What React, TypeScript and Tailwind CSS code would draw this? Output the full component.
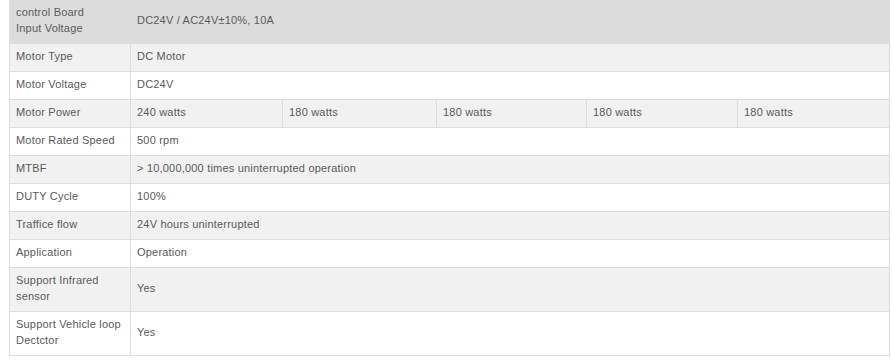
import { Fragment } from "react";

const rows: { label: string; value: string; shade: "dark" | "gray" | "white" }[] = [
  { label: "control Board\nInput Voltage", value: "DC24V / AC24V±10%, 10A", shade: "dark" },
  { label: "Motor Type", value: "DC Motor", shade: "gray" },
  { label: "Motor Voltage", value: "DC24V", shade: "white" },
];

const rest: { label: string; value: string; shade: "gray" | "white" }[] = [
  { label: "Motor Rated Speed", value: "500 rpm", shade: "white" },
  { label: "MTBF", value: "> 10,000,000 times uninterrupted operation", shade: "gray" },
  { label: "DUTY Cycle", value: "100%", shade: "white" },
  { label: "Traffice flow", value: "24V hours uninterrupted", shade: "gray" },
  { label: "Application", value: "Operation", shade: "white" },
  { label: "Support Infrared sensor", value: "Yes", shade: "gray" },
  { label: "Support Vehicle loop Dectctor", value: "Yes", shade: "white" },
];

const power = ["240 watts", "180 watts", "180 watts", "180 watts", "180 watts"];

const bg = {
  dark: "bg-[#dcdcdc]",
  gray: "bg-[#f1f1f1]",
  white: "bg-white",
};

const cell = "border border-[#dddddd] px-[6px] pt-[4px] pb-[7px] align-middle";

function Row({ label, value, shade }: { label: string; value: string; shade: keyof typeof bg }) {
  const lines = label.split("\n");
  return (
    <tr className={bg[shade]}>
      <td className={cell}>
        {lines.map((l, i) => (
          <Fragment key={i}>
            {i > 0 && <br />}
            {l}
          </Fragment>
        ))}
      </td>
      <td className={cell} colSpan={5}>
        {value}
      </td>
    </tr>
  );
}

export default function App() {
  return (
    <div className="h-[360px] w-[892px] overflow-hidden bg-white">
      <table
        className="-mt-px ml-[9px] w-[880px] table-fixed border-collapse text-[11px] leading-[16px] tracking-[0.2px] text-[#5a5a5a]"
        style={{ fontFamily: '"Liberation Sans", Arial, sans-serif' }}
      >
        <colgroup>
          <col className="w-[121px]" />
          <col className="w-[152px]" />
          <col className="w-[154px]" />
          <col className="w-[150px]" />
          <col className="w-[151px]" />
          <col className="w-[152px]" />
        </colgroup>
        <tbody>
          {rows.map((r) => (
            <Row key={r.label} {...r} />
          ))}
          <tr className={bg.gray}>
            <td className={cell}>Motor Power</td>
            {power.map((p, i) => (
              <td key={i} className={cell}>
                {p}
              </td>
            ))}
          </tr>
          {rest.map((r) => (
            <Row key={r.label} {...r} />
          ))}
        </tbody>
      </table>
    </div>
  );
}
